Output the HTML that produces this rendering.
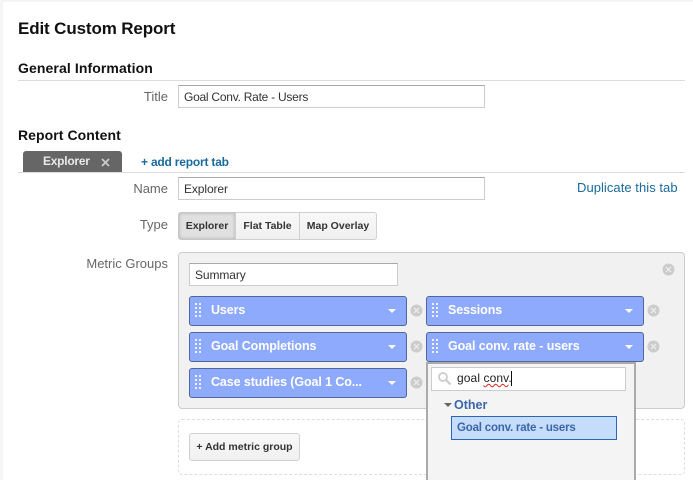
<!DOCTYPE html>
<html><head><meta charset="utf-8">
<style>
html,body{margin:0;padding:0;width:693px;height:480px;overflow:hidden;background:#f5f5f5}
body{position:relative;font-family:"Liberation Sans",sans-serif}
#p{position:absolute;left:3px;top:2px;width:690px;height:478px;background:#fff}
.a{position:absolute;white-space:nowrap;box-sizing:border-box}
.h{color:#111;font-weight:bold}
.l{color:#666;font-size:13px;text-align:right;width:120px;left:48px;line-height:16px}
.i{background:#fff;border:1px solid #ccc;border-top-color:#a8a8a8;color:#333;font-size:12px;padding-left:5px;letter-spacing:-.1px}
.hr{height:1px;background:#ddd;left:18px;width:667px}
.chip{width:218px;height:30px;background:#8eaafd;border:1px solid #4f669f;border-radius:3px;color:#fff;font-weight:bold;font-size:12.5px;line-height:26px;padding-left:21px;letter-spacing:-.1px}
.chip svg.g{position:absolute;left:2px;top:4px}
.chip i{position:absolute;right:10px;top:12px;width:0;height:0;border-left:4.5px solid transparent;border-right:4.5px solid transparent;border-top:4.5px solid #fff}
.btn{height:28px;font-weight:bold;font-size:10.5px;color:#333;text-align:center;line-height:26px;border:1px solid #d0d0d0;background:linear-gradient(#f8f8f8,#f0f0f0)}
</style></head><body>
<div id="p"></div>
<div class="a h" style="left:18px;top:18px;font-size:17px;line-height:21px;letter-spacing:-.13px">Edit Custom Report</div>
<div class="a h" style="left:18px;top:60px;font-size:14px;line-height:16px;letter-spacing:.1px">General Information</div>
<div class="a hr" style="top:80px"></div>
<div class="a l" style="top:89px">Title</div>
<div class="a i" style="left:178px;top:85px;width:307px;height:23px;line-height:22px;letter-spacing:-.25px">Goal Conv. Rate - Users</div>
<div class="a h" style="left:18px;top:127px;font-size:14px;line-height:16px;letter-spacing:.07px">Report Content</div>
<div class="a" style="left:23px;top:151px;width:99px;height:21px;background:#666;border-radius:3px 3px 0 0;color:#e8e8e8;font-weight:bold;font-size:12px;line-height:20px;padding-left:20px;letter-spacing:-.25px">Explorer</div>
<svg class="a" style="left:101px;top:158px" width="9" height="9"><path d="M1 1L8 8M8 1L1 8" stroke="#ccc" stroke-width="1.7"/></svg>
<div class="a" style="left:141px;top:154px;color:#1b6a9e;font-weight:bold;font-size:12px;line-height:16px;letter-spacing:-.2px">+ add report tab</div>
<div class="a hr" style="top:172px"></div>
<div class="a l" style="top:181px">Name</div>
<div class="a i" style="left:178px;top:177px;width:307px;height:23px;line-height:22px">Explorer</div>
<div class="a" style="left:577px;top:180px;color:#1b6a9e;font-size:13px;line-height:16px;letter-spacing:.05px">Duplicate this tab</div>
<div class="a l" style="top:217px">Type</div>
<div class="a btn" style="left:178px;top:212px;width:58px;background:#e0e0e0;border-color:#c8c8c8;border-radius:3px 0 0 3px;box-shadow:inset 0 0 3px #aaa">Explorer</div>
<div class="a btn" style="left:235px;top:212px;width:65px">Flat Table</div>
<div class="a btn" style="left:299px;top:212px;width:78px;border-radius:0 3px 3px 0">Map Overlay</div>
<div class="a l" style="top:256px">Metric Groups</div>
<div class="a" style="left:178px;top:252px;width:507px;height:157px;background:#f1f1f1;border:1px solid #ccc;border-radius:4px"></div>
<div class="a i" style="left:189px;top:263px;width:209px;height:23px;line-height:22px">Summary</div>
<svg width="0" height="0" style="position:absolute"><defs>
<g id="x"><circle cx="6.5" cy="6.5" r="6" fill="#ccc"/><path d="M4 4L9 9M9 4L4 9" stroke="#f1f1f1" stroke-width="1.1"/></g>
<g id="d" fill="#fff" opacity=".85"><rect x="3" y="2" width="2" height="2"/><rect x="7" y="2" width="2" height="2"/><rect x="3" y="6" width="2" height="2"/><rect x="7" y="6" width="2" height="2"/><rect x="3" y="10" width="2" height="2"/><rect x="7" y="10" width="2" height="2"/><rect x="3" y="14" width="2" height="2"/><rect x="7" y="14" width="2" height="2"/></g>
</defs></svg>
<div class="a chip" style="left:189px;top:296px"><svg class="g" width="12" height="18"><use href="#d"/></svg>Users<i></i></div>
<div class="a chip" style="left:426px;top:296px"><svg class="g" width="12" height="18"><use href="#d"/></svg>Sessions<i></i></div>
<div class="a chip" style="left:189px;top:332px"><svg class="g" width="12" height="18"><use href="#d"/></svg>Goal Completions<i></i></div>
<div class="a chip" style="left:426px;top:332px"><svg class="g" width="12" height="18"><use href="#d"/></svg>Goal conv. rate - users<i></i></div>
<div class="a chip" style="left:189px;top:368px"><svg class="g" width="12" height="18"><use href="#d"/></svg>Case studies (Goal 1 Co...<i></i></div>
<svg class="a" style="left:409.5px;top:303.5px" width="13" height="13"><use href="#x"/></svg>
<svg class="a" style="left:646.5px;top:303.5px" width="13" height="13"><use href="#x"/></svg>
<svg class="a" style="left:409.5px;top:339.5px" width="13" height="13"><use href="#x"/></svg>
<svg class="a" style="left:646.5px;top:339.5px" width="13" height="13"><use href="#x"/></svg>
<svg class="a" style="left:409.5px;top:375.5px" width="13" height="13"><use href="#x"/></svg>
<svg class="a" style="left:661.5px;top:262.5px" width="13" height="13"><use href="#x"/></svg>
<div class="a" style="left:178px;top:419px;width:507px;height:56px;border:1px dashed #ddd;border-radius:4px"></div>
<div class="a btn" style="left:189px;top:433px;width:111px;border-radius:3px;font-size:10.5px">+ Add metric group</div>
<div class="a" style="left:426px;top:362px;width:210px;height:118px;background:#f4f4f4;border:2px solid #aaa;border-bottom:0"></div>
<div class="a" style="left:431px;top:367px;width:195px;height:24px;background:#fff;border:1px solid #ccc"></div>
<svg class="a" style="left:437px;top:371px" width="15" height="15"><circle cx="6" cy="6" r="4" fill="none" stroke="#ccc" stroke-width="1.8"/><path d="M9 9L13.5 13.5" stroke="#ccc" stroke-width="2.2"/></svg>
<div class="a" style="left:457px;top:370px;font-size:12px;line-height:16px;color:#222;letter-spacing:.1px">goal <span style="text-decoration:underline wavy #d22;text-decoration-thickness:1px">conv</span>.</div>
<div class="a" style="left:511px;top:371px;width:1px;height:15px;background:#111"></div>
<div class="a" style="left:444px;top:403px;width:0;height:0;border-left:4px solid transparent;border-right:4px solid transparent;border-top:4px solid #666"></div>
<div class="a" style="left:454px;top:397px;color:#3b66aa;font-weight:bold;font-size:12.5px;line-height:16px">Other</div>
<div class="a" style="left:451px;top:416px;width:166px;height:24px;background:#c5dcfb;border:1px solid #2a66b5;color:#3b66aa;font-weight:bold;font-size:11.5px;line-height:22px;padding-left:5px;letter-spacing:-.2px">Goal conv. rate - users</div>
</body></html>
